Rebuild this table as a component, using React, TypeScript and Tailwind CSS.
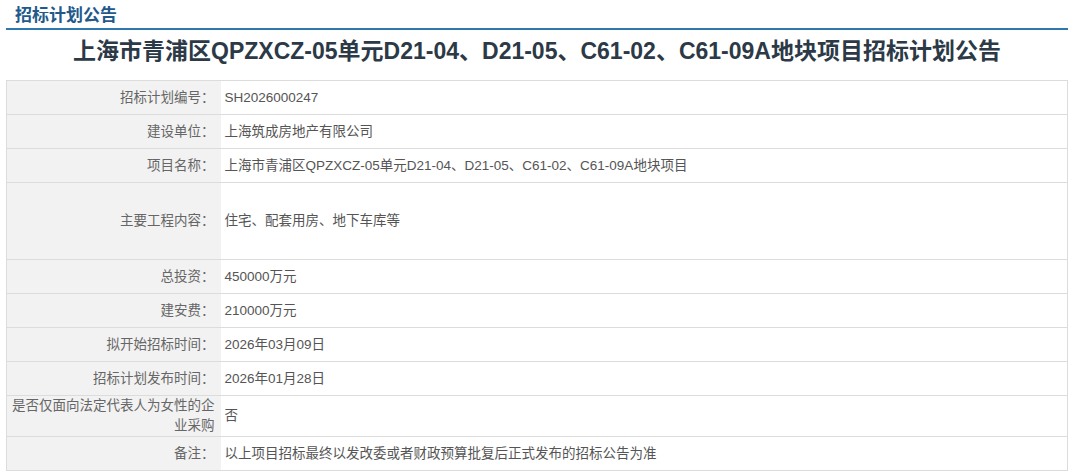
import React from 'react';

interface Row {
  label: string;
  value: string;
  height: string;
}

const rows: Row[] = [
  { label: '招标计划编号：', value: 'SH2026000247', height: 'h-[34px]' },
  { label: '建设单位：', value: '上海筑成房地产有限公司', height: 'h-[34px]' },
  { label: '项目名称：', value: '上海市青浦区QPZXCZ-05单元D21-04、D21-05、C61-02、C61-09A地块项目', height: 'h-[34px]' },
  { label: '主要工程内容：', value: '住宅、配套用房、地下车库等', height: 'h-[77px]' },
  { label: '总投资：', value: '450000万元', height: 'h-[34px]' },
  { label: '建安费：', value: '210000万元', height: 'h-[34px]' },
  { label: '拟开始招标时间：', value: '2026年03月09日', height: 'h-[34px]' },
  { label: '招标计划发布时间：', value: '2026年01月28日', height: 'h-[34px]' },
  { label: '是否仅面向法定代表人为女性的企业采购', value: '否', height: 'h-[41px]' },
  { label: '备注：', value: '以上项目招标最终以发改委或者财政预算批复后正式发布的招标公告为准', height: 'h-[34px]' },
];

const App: React.FC = () => {
  return (
    <div
      className="w-[1080px] h-[476px] bg-white overflow-hidden"
      style={{ fontFamily: '"Liberation Sans", "Noto Sans CJK SC", sans-serif' }}
    >
      <div className="ml-[6px] w-[1062px]">
        {/* Section header */}
        <div className="h-[30px] border-b-2 border-[#2f78ad] pl-[9px] pt-[4px]">
          <span className="text-[17px] leading-[22px] font-bold text-[#22598a]">招标计划公告</span>
        </div>

        {/* Title */}
        <h1 className="mt-[7px] text-center text-[23px] leading-[28px] font-bold text-[#2c3947]">
          上海市青浦区QPZXCZ-05单元D21-04、D21-05、C61-02、C61-09A地块项目招标计划公告
        </h1>

        {/* Info table */}
        <table className="mt-[15px] w-full border-collapse border border-[#dcdcdc] text-[13.5px]">
          <tbody>
            {rows.map((row) => (
              <tr key={row.label} className={`${row.height} border-b border-[#dcdcdc]`}>
                <td className="w-[214px] bg-[#f2f2f2] text-right text-[#666] pl-[2px] pr-[6px] leading-[20px] align-middle">
                  {row.label}
                </td>
                <td className="bg-white text-[#555] pl-[4px] leading-[20px] align-middle">{row.value}</td>
              </tr>
            ))}
          </tbody>
        </table>
      </div>
    </div>
  );
};

export default App;
